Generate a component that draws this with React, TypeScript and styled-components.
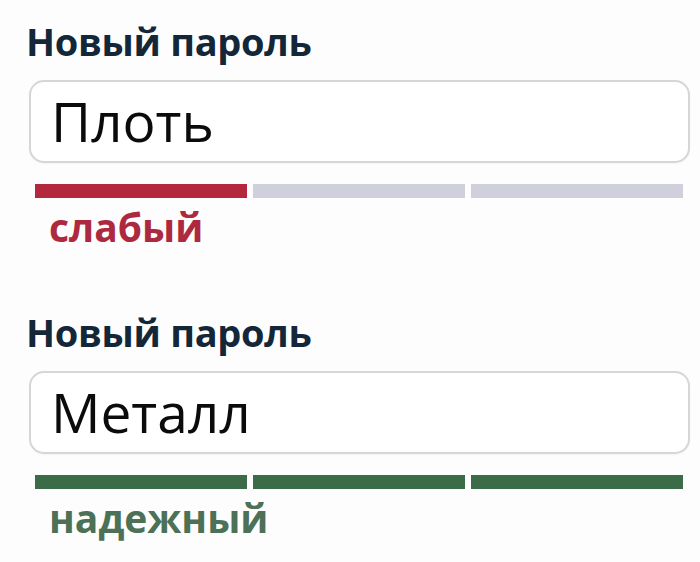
import {FC} from 'react'
import styled, {createGlobalStyle} from 'styled-components'

type Strength = 'weak' | 'strong'

const strengthColors: Record<Strength, {bar: string; text: string; filled: number; label: string}> = {
    weak: {bar: '#b3283f', text: '#ad2940', filled: 1, label: 'слабый'},
    strong: {bar: '#3c6b47', text: '#4c7156', filled: 3, label: 'надежный'},
}

const GlobalStyle = createGlobalStyle`
    html, body {
        margin: 0;
        padding: 0;
        background: #fdfdfd;
    }

    body {
        font-family: "Open Sans", "Noto Sans", "Liberation Sans", sans-serif;
        -webkit-font-smoothing: antialiased;
    }
`

const Page = styled.div`
    width: 700px;
    height: 562px;
    display: flex;
    flex-direction: column;
    gap: 61px;
    padding: 19px 0 0 26px;
    box-sizing: border-box;
    overflow: hidden;
`

const Field = styled.div`
    display: flex;
    flex-direction: column;
    width: 664px;
`

const Label = styled.label`
    font-size: 38px;
    line-height: 44px;
    font-weight: 700;
    color: #132739;
    letter-spacing: -0.3px;
`

const InputBox = styled.div`
    margin: 17px 0 0 3px;
    height: 83px;
    box-sizing: border-box;
    border: 2px solid #d6d6d8;
    border-radius: 15px;
    background: #fff;
    box-shadow: 0 1px 2px rgba(0, 0, 0, 0.04);
    display: flex;
    align-items: center;
    padding: 0 20px;
`

const Value = styled.span`
    font-size: 55px;
    line-height: 55px;
    font-weight: 400;
    color: #0b0b0b;
    margin-top: -3px;
`

const Meter = styled.div`
    margin: 21px 0 0 9px;
    width: 648px;
    display: grid;
    grid-template-columns: repeat(3, 1fr);
    gap: 6px;
`

const Segment = styled.div<{ $color: string }>`
    height: 14px;
    background: ${(p) => p.$color};
`

const Verdict = styled.div<{ $color: string }>`
    margin: 7px 0 0 23px;
    font-size: 39px;
    line-height: 44px;
    font-weight: 700;
    color: ${(p) => p.$color};
`

interface PasswordFieldProps {
    value: string
    strength: Strength
}

const PasswordField: FC<PasswordFieldProps> = ({value, strength}) => {
    const s = strengthColors[strength]
    return (
        <Field>
            <Label>Новый пароль</Label>
            <InputBox>
                <Value>{value}</Value>
            </InputBox>
            <Meter>
                {[0, 1, 2].map((i) => (
                    <Segment key={i} $color={i < s.filled ? s.bar : '#d0d0dc'}/>
                ))}
            </Meter>
            <Verdict $color={s.text}>{s.label}</Verdict>
        </Field>
    )
}

const App: FC = () => (
    <>
        <GlobalStyle/>
        <Page>
            <PasswordField value="Плоть" strength="weak"/>
            <PasswordField value="Металл" strength="strong"/>
        </Page>
    </>
)

export default App
